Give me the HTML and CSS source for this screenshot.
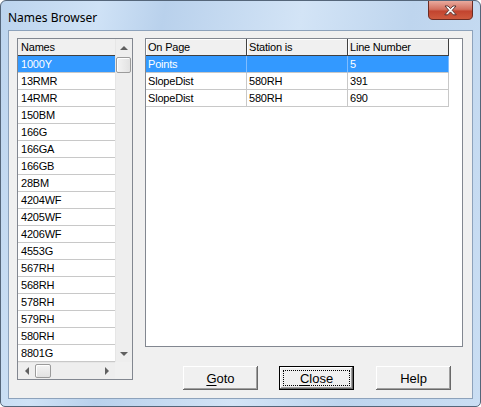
FILE: index.html
```html
<!DOCTYPE html>
<html>
<head>
<meta charset="utf-8">
<link rel="stylesheet" href="styles.css">
</head>
<body>
<div class="window">
  <div class="titlebar">
    <span class="title">Names Browser</span>
    <svg class="closebox" width="45" height="19" viewBox="0 0 45 19">
      <defs>
        <linearGradient id="rg" x1="0" y1="0" x2="0" y2="1">
          <stop offset="0" stop-color="#e9aa9e"/>
          <stop offset="0.45" stop-color="#d2705f"/>
          <stop offset="0.55" stop-color="#c2442f"/>
          <stop offset="1" stop-color="#cf5b3f"/>
        </linearGradient>
      </defs>
      <path d="M0.5 0 V14 Q0.5 18.5 5 18.5 H40 Q44.5 18.5 44.5 14 V0" fill="url(#rg)" stroke="#6b2b22"/>
      <path d="M17 5 L20 5 L22.5 7.6 L25 5 L28 5 L24.2 9.3 L28.2 13.8 L25.2 13.8 L22.5 10.9 L19.8 13.8 L16.8 13.8 L20.8 9.3 Z" fill="#ffffff" stroke="#4a2a2a" stroke-width="0.9" stroke-linejoin="round"/>
    </svg>
  </div>
  <div class="client">
    <div class="names">
      <div class="names-main">
        <div class="names-hdr">Names</div>
        <div class="nrow sel">1000Y</div>
        <div class="nrow">13RMR</div>
        <div class="nrow">14RMR</div>
        <div class="nrow">150BM</div>
        <div class="nrow">166G</div>
        <div class="nrow">166GA</div>
        <div class="nrow">166GB</div>
        <div class="nrow">28BM</div>
        <div class="nrow">4204WF</div>
        <div class="nrow">4205WF</div>
        <div class="nrow">4206WF</div>
        <div class="nrow">4553G</div>
        <div class="nrow">567RH</div>
        <div class="nrow">568RH</div>
        <div class="nrow">578RH</div>
        <div class="nrow">579RH</div>
        <div class="nrow">580RH</div>
        <div class="nrow">8801G</div>
      </div>
      <div class="vscroll">
        <div class="sb-btn"><span class="tri-up"></span></div>
        <div class="vthumb"></div>
        <div class="sb-fill"></div>
        <div class="sb-btn"><span class="tri-down"></span></div>
      </div>
      <div class="hscroll">
        <div class="sb-btn"><span class="tri-left"></span></div>
        <div class="hthumb"></div>
        <div class="sb-fill"></div>
        <div class="sb-btn"><span class="tri-right"></span></div>
      </div>
      <div class="corner"></div>
    </div>
    <div class="right">
      <div class="listview">
        <div class="lv-hdr">
          <div class="hc">On Page</div>
          <div class="hc">Station is</div>
          <div class="hc">Line Number</div>
        </div>
        <div class="lv-row sel-row">
          <div class="c">Points</div>
          <div class="c"></div>
          <div class="c">5</div>
        </div>
        <div class="lv-row">
          <div class="c">SlopeDist</div>
          <div class="c">580RH</div>
          <div class="c">391</div>
        </div>
        <div class="lv-row">
          <div class="c">SlopeDist</div>
          <div class="c">580RH</div>
          <div class="c">690</div>
        </div>
      </div>
      <div class="buttons">
        <button class="btn"><u>G</u>oto</button>
        <button class="btn default"><span class="focus"><u>C</u>lose</span></button>
        <button class="btn">Help</button>
      </div>
    </div>
  </div>
</div>
</body>
</html>
```
FILE: styles.css
```css
* { box-sizing: border-box; }
html, body { margin: 0; padding: 0; }
body { width: 481px; height: 407px; overflow: hidden; background: #ffffff; }

.window {
  width: 481px;
  height: 407px;
  border: 1px solid #55667a;
  border-radius: 6px 6px 5px 5px;
  background: linear-gradient(100deg, #bcd4ee 0%, #cfe2f6 18%, #b9d1ec 30%, #d3e4f6 55%, #bed5ee 75%, #cadef3 100%);
  padding: 0 7px 7px 7px;
  display: flex;
  flex-direction: column;
}

.titlebar {
  height: 29px;
  position: relative;
  display: flex;
  align-items: center;
}
.title {
  font-family: "Noto Sans", "Open Sans", sans-serif;
  font-size: 12px;
  color: #000;
  margin-top: 4px;
  margin-left: 0;
}
.closebox {
  position: absolute;
  right: 0;
  top: 0;
}

.client {
  width: 465px;
  height: 369px;
  background: #f0f0f0;
  border: 1px solid #8da2bb;
  padding: 7px 8px 0 8px;
  display: flex;
  gap: 12px;
  font-family: "Liberation Sans", Arial, sans-serif;
  font-size: 11px;
  color: #000;
}

/* Names list */
.names {
  width: 116px;
  height: 342px;
  border: 1px solid #828790;
  background: #ffffff;
  display: grid;
  grid-template-columns: 97px 17px;
  grid-template-rows: 323px 17px;
}
.names-main { overflow: hidden; background: #fff; }
.names-hdr {
  height: 17px;
  line-height: 16px;
  padding-left: 3px;
  background: #f0f0f0;
  border-bottom: 1px solid #404040;
  letter-spacing: -0.2px;
}
.nrow {
  height: 17px;
  line-height: 16px;
  padding-left: 3px;
  border-bottom: 1px solid #c8c8c8;
  letter-spacing: -0.2px;
}
.sel { background: #3399ff; color: #ffffff; }

.vscroll {
  display: flex;
  flex-direction: column;
  background: #eeeeee;
  border-left: 1px solid #e6e6e6;
}
.hscroll {
  display: flex;
  background: #eeeeee;
  border-top: 1px solid #e6e6e6;
}
.corner { background: #f0f0f0; }
.sb-btn {
  width: 17px;
  height: 17px;
  flex: none;
  display: flex;
  align-items: center;
  justify-content: center;
}
.hscroll .sb-btn { height: 16px; }
.vscroll .sb-btn { width: 16px; }
.sb-fill { flex: 1; }
.vthumb {
  width: 15px;
  height: 16px;
  margin: 1px 0 0 0;
  flex: none;
  border: 1px solid #9b9b9b;
  border-radius: 2px;
  background: linear-gradient(to right, #f4f4f4, #e2e2e2);
  box-shadow: inset 1px 1px #ffffff;
}
.hthumb {
  width: 16px;
  height: 14px;
  margin-top: 1px;
  flex: none;
  border: 1px solid #9b9b9b;
  border-radius: 2px;
  background: linear-gradient(to bottom, #f4f4f4, #e2e2e2);
  box-shadow: inset 1px 1px #ffffff;
}
.tri-up, .tri-down, .tri-left, .tri-right { width: 0; height: 0; display: block; }
.tri-up { border-left: 4px solid transparent; border-right: 4px solid transparent; border-bottom: 4px solid #606060; }
.tri-down { border-left: 4px solid transparent; border-right: 4px solid transparent; border-top: 4px solid #606060; }
.tri-left { border-top: 4px solid transparent; border-bottom: 4px solid transparent; border-right: 4px solid #606060; }
.tri-right { border-top: 4px solid transparent; border-bottom: 4px solid transparent; border-left: 4px solid #606060; }

/* Right side */
.right {
  display: flex;
  flex-direction: column;
}
.listview {
  width: 318px;
  height: 309px;
  border: 1px solid #828790;
  background: #ffffff;
}
.lv-hdr, .lv-row { display: flex; }
.hc {
  width: 101px;
  height: 17px;
  line-height: 16px;
  padding-left: 2px;
  background: #f0f0f0;
  border-right: 1px solid #404040;
  border-bottom: 1px solid #404040;
  box-shadow: inset 1px 1px #ffffff;
  letter-spacing: -0.2px;
}
.c {
  width: 101px;
  height: 17px;
  line-height: 16px;
  padding-left: 2px;
  border-right: 1px solid #c8c8c8;
  border-bottom: 1px solid #c8c8c8;
  letter-spacing: -0.2px;
}
.sel-row .c { background: #3399ff; color: #ffffff; border-right-color: #7fbcff; }

.buttons {
  display: flex;
  margin-top: 19px;
  margin-left: 38px;
  gap: 21px;
}
.btn {
  width: 75px;
  height: 24px;
  padding: 0;
  background: #f0f0f0;
  border: none;
  font-family: "Liberation Sans", Arial, sans-serif;
  font-size: 13px;
  font-weight: normal;
  color: #000;
  box-shadow: inset -1px -1px #696969, inset 1px 1px #ffffff, inset -2px -2px #a0a0a0, inset 2px 2px #f0f0f0;
}
.btn u { text-decoration: underline; text-underline-offset: 2px; }
.btn.default {
  border: 1px solid #000;
  box-shadow: inset -1px -1px #696969, inset 1px 1px #ffffff, inset -2px -2px #a0a0a0;
  display: flex;
  padding: 3px;
}
.focus {
  flex: 1;
  border: 1px dotted #000;
  display: flex;
  align-items: center;
  justify-content: center;
}
.buttons .btn:last-child { margin-left: 1px; }
```
